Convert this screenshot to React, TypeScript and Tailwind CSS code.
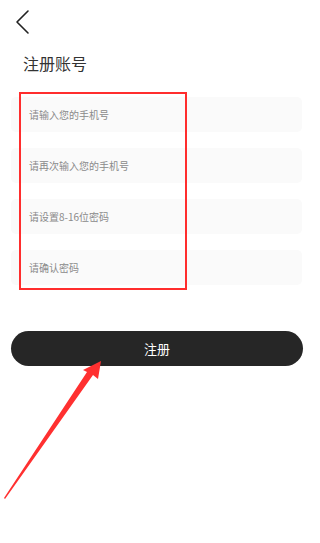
const fields = ["请输入您的手机号", "请再次输入您的手机号", "请设置8-16位密码", "请确认密码"];

export default function App() {
  return (
    <div
      className="relative w-[320px] h-[543px] bg-white overflow-hidden"
      style={{ fontFamily: '"Noto Sans CJK SC", "Noto Sans", sans-serif' }}
    >
      {/* Header */}
      <div className="h-[44px] pl-[15px] pt-[9px]">
        <svg width="16" height="26" viewBox="0 0 16 26" fill="none">
          <path d="M13 2 L2 13 L13 24" stroke="#222" strokeWidth="1.6" strokeLinecap="round" strokeLinejoin="round" />
        </svg>
      </div>
      <h1 className="pl-[23px] mt-[8px] text-[16px] leading-[22px] text-[#333] font-normal">注册账号</h1>

      {/* Fields */}
      <div className="mt-[23px] px-[11px] pr-[18px] flex flex-col gap-[16px]">
        {fields.map((f) => (
          <div key={f} className="h-[35px] rounded-[5px] bg-[#fafafa] flex items-center pl-[18px]">
            <span className="text-[10px] text-[#8a8a8a]">{f}</span>
          </div>
        ))}
      </div>

      <div className="mt-[46px] px-[11px] pr-[17px]">
        <button className="w-full h-[35px] rounded-full bg-[#262626] text-white text-[13px]">注册</button>
      </div>

      {/* Annotation overlays */}
      <div className="absolute left-[19px] top-[92px] w-[168px] h-[198px] border-2 border-[#ff2d2d]" />
      <svg className="absolute left-0 top-0" width="320" height="543" viewBox="0 0 320 543">
        <polygon
          points="101,361 98,379 93,375 5,499 4,498 87,372 83,370"
          fill="#ff3030"
        />
      </svg>
    </div>
  );
}
